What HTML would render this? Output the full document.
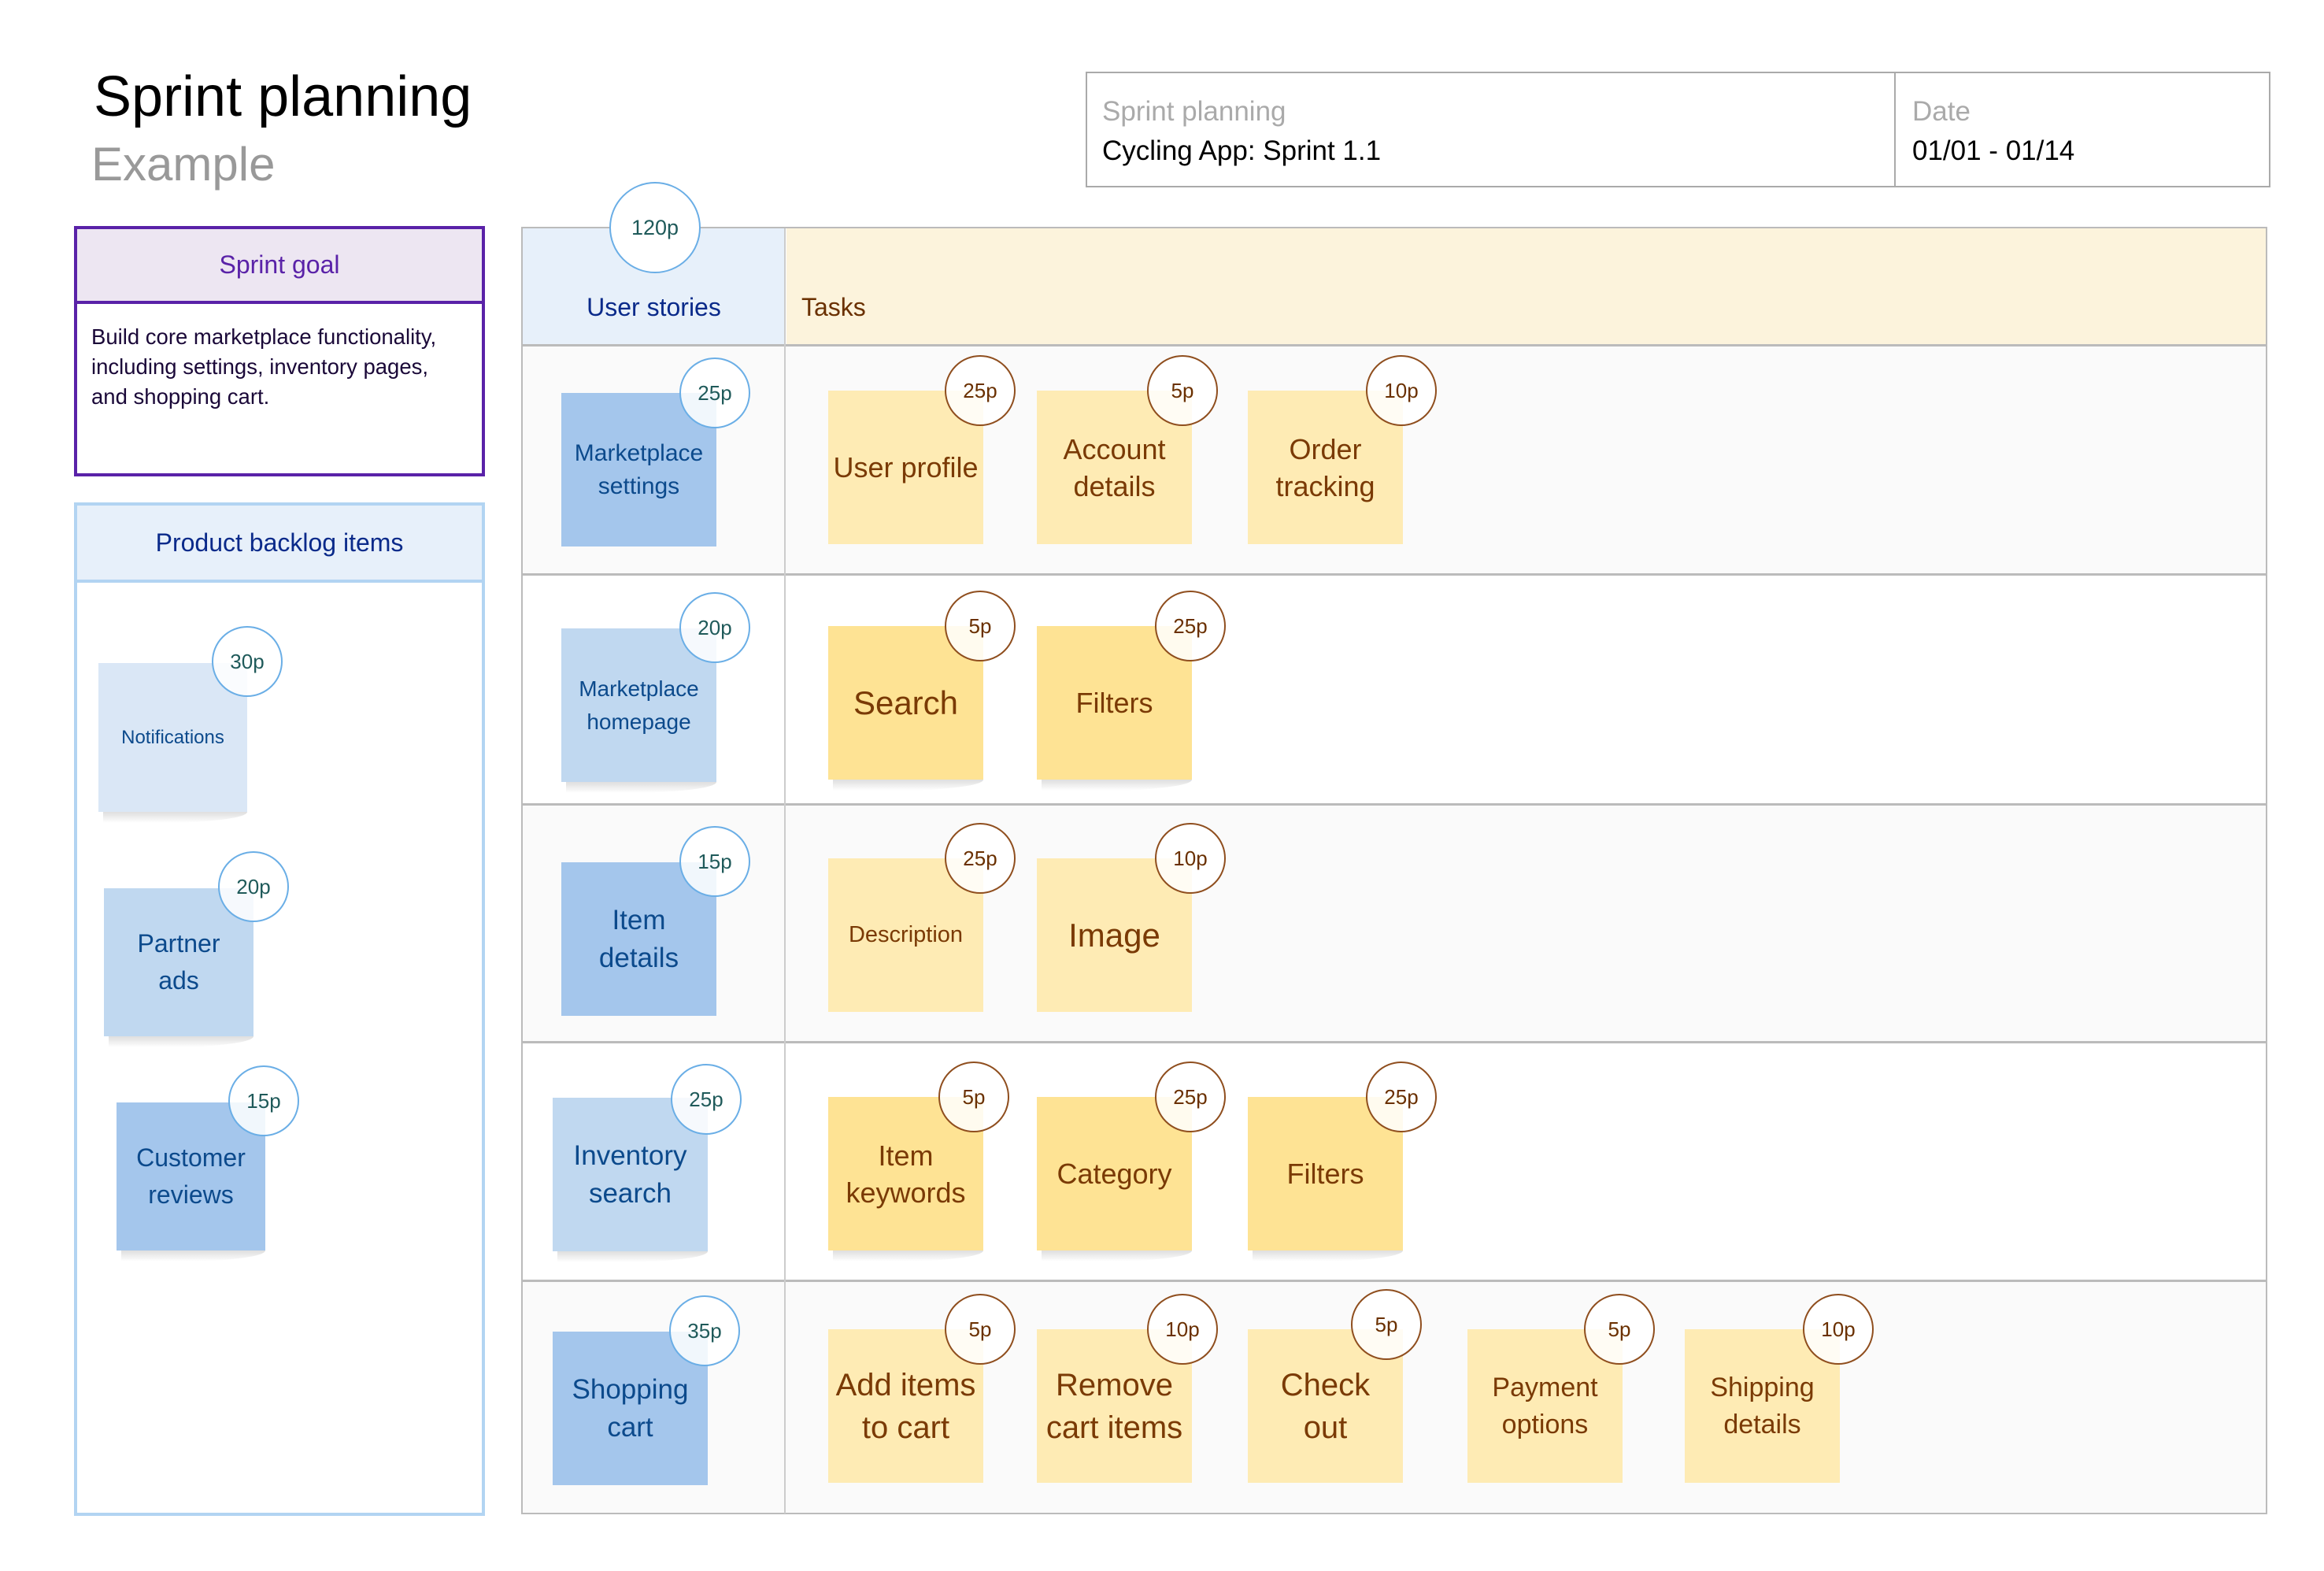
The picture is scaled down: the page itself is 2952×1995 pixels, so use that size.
<!DOCTYPE html>
<html><head><meta charset="utf-8"><style>
*{margin:0;padding:0;box-sizing:border-box}
body{width:2952px;height:1995px;background:#fff;position:relative;overflow:hidden;font-family:"Liberation Sans",Arial,sans-serif}
.a{position:absolute}
.s{position:absolute;width:197px;height:195px;display:flex;align-items:center;justify-content:center;text-align:center;line-height:47px}
.s::after{content:"";position:absolute;left:6px;right:0;bottom:-14px;height:14px;background:linear-gradient(to bottom,rgba(0,0,0,.13),rgba(0,0,0,0));border-radius:0 0 60% 0/0 0 100% 0;z-index:-1}
.t{color:#7a3a05;font-size:36px}
.u{color:#0c4a8c;font-size:31px;line-height:42px}
.c{position:absolute;width:90px;height:90px;border-radius:50%;background:rgba(255,255,255,.85);display:flex;align-items:center;justify-content:center;font-size:26px;z-index:2}
.cy{border:2px solid #8f4e1e;color:#6a3000}
.cb{border:2px solid #6aaee6;color:#1f5a5a}
</style></head><body>
<div class="a" style="left:119px;top:82px;font-size:72px;color:#000">Sprint planning</div>
<div class="a" style="left:116px;top:174px;font-size:60px;color:#999">Example</div>

<div class="a" style="left:1379px;top:91px;width:1505px;height:147px;border:2px solid #aaa"></div>
<div class="a" style="left:2406px;top:91px;width:2px;height:147px;background:#aaa"></div>
<div class="a" style="left:1400px;top:122px;font-size:35px;color:#aaa">Sprint planning</div>
<div class="a" style="left:1400px;top:172px;font-size:35px;color:#000">Cycling App: Sprint 1.1</div>
<div class="a" style="left:2429px;top:122px;font-size:35px;color:#aaa">Date</div>
<div class="a" style="left:2429px;top:172px;font-size:35px;color:#000">01/01 - 01/14</div>

<div class="a" style="left:94px;top:287px;width:522px;height:318px;border:4px solid #5a22a8"></div>
<div class="a" style="left:98px;top:291px;width:514px;height:95px;background:#ede6f2;border-bottom:4px solid #5a22a8;display:flex;align-items:center;justify-content:center;font-size:32px;color:#5a22a8">Sprint goal</div>
<div class="a" style="left:116px;top:409px;font-size:27.5px;line-height:38px;color:#1a0838">Build core marketplace functionality,<br>including settings, inventory pages,<br>and shopping cart.</div>

<div class="a" style="left:94px;top:638px;width:522px;height:1287px;border:4px solid #b2d4f2"></div>
<div class="a" style="left:98px;top:642px;width:514px;height:98px;background:#e7f0fa;border-bottom:4px solid #b2d4f2;display:flex;align-items:center;justify-content:center;font-size:32px;color:#0a2a8a">Product backlog items</div>
<div class="s u" style="left:125px;top:842px;width:189px;height:189px;background:#dae7f6;font-size:24px">Notifications</div>
<div class="c cb" style="left:269px;top:795px">30p</div>
<div class="s u" style="left:132px;top:1128px;width:190px;height:188px;background:#c0d8f0;font-size:32px;line-height:47px">Partner<br>ads</div>
<div class="c cb" style="left:277px;top:1081px">20p</div>
<div class="s u" style="left:148px;top:1400px;width:189px;height:188px;background:#a4c6ec;font-size:32px;line-height:47px">Customer<br>reviews</div>
<div class="c cb" style="left:290px;top:1353px">15p</div>

<div class="a" style="left:662px;top:288px;width:2218px;height:1635px;border:2px solid #bbb"></div>
<div class="a" style="left:664px;top:290px;width:333px;height:147px;background:#e7f0fa"></div>
<div class="a" style="left:999px;top:290px;width:1879px;height:147px;background:#fcf3dc"></div>
<div class="a" style="left:664px;top:437px;width:2214px;height:3px;background:#bbb"></div>
<div class="a" style="left:664px;top:440px;width:2214px;height:288px;background:#fafafa"></div>
<div class="a" style="left:664px;top:728px;width:2214px;height:3px;background:#bbb"></div>
<div class="a" style="left:664px;top:1020px;width:2214px;height:3px;background:#bbb"></div>
<div class="a" style="left:664px;top:1023px;width:2214px;height:299px;background:#fafafa"></div>
<div class="a" style="left:664px;top:1322px;width:2214px;height:3px;background:#bbb"></div>
<div class="a" style="left:664px;top:1625px;width:2214px;height:3px;background:#bbb"></div>
<div class="a" style="left:664px;top:1628px;width:2214px;height:293px;background:#fafafa"></div>
<div class="a" style="left:996px;top:290px;width:2px;height:1632px;background:#ccc"></div>
<div class="a" style="left:664px;top:372px;width:333px;text-align:center;font-size:32px;color:#0a2a8a">User stories</div>
<div class="a" style="left:1018px;top:372px;font-size:32px;color:#6a3000">Tasks</div>
<div class="c cb" style="left:774px;top:231px;width:116px;height:116px;background:#fff;font-size:27px">120p</div>

<div class="s u" style="left:713px;top:499px;background:#a4c6ec;font-size:30px">Marketplace<br>settings</div>
<div class="c cb" style="left:863px;top:454px">25p</div>
<div class="s u" style="left:713px;top:798px;background:#c0d8f0;font-size:28px">Marketplace<br>homepage</div>
<div class="c cb" style="left:863px;top:752px">20p</div>
<div class="s u" style="left:713px;top:1095px;background:#a4c6ec;font-size:35px;line-height:48px">Item<br>details</div>
<div class="c cb" style="left:863px;top:1049px">15p</div>
<div class="s u" style="left:702px;top:1394px;background:#c0d8f0;font-size:35px;line-height:48px">Inventory<br>search</div>
<div class="c cb" style="left:852px;top:1351px">25p</div>
<div class="s u" style="left:702px;top:1691px;background:#a4c6ec;font-size:35px;line-height:48px">Shopping<br>cart</div>
<div class="c cb" style="left:850px;top:1645px">35p</div>

<div class="s t" style="left:1052px;top:496px;background:#feebb4">User profile</div>
<div class="c cy" style="left:1200px;top:451px">25p</div>
<div class="s t" style="left:1317px;top:496px;background:#feebb4">Account<br>details</div>
<div class="c cy" style="left:1457px;top:451px">5p</div>
<div class="s t" style="left:1585px;top:496px;background:#feebb4">Order<br>tracking</div>
<div class="c cy" style="left:1735px;top:451px">10p</div>
<div class="s t" style="left:1052px;top:795px;background:#fee394;font-size:42px">Search</div>
<div class="c cy" style="left:1200px;top:750px">5p</div>
<div class="s t" style="left:1317px;top:795px;background:#fee394">Filters</div>
<div class="c cy" style="left:1467px;top:750px">25p</div>
<div class="s t" style="left:1052px;top:1090px;background:#feebb4;font-size:29px">Description</div>
<div class="c cy" style="left:1200px;top:1045px">25p</div>
<div class="s t" style="left:1317px;top:1090px;background:#feebb4;font-size:42px">Image</div>
<div class="c cy" style="left:1467px;top:1045px">10p</div>
<div class="s t" style="left:1052px;top:1393px;background:#fee394">Item<br>keywords</div>
<div class="c cy" style="left:1192px;top:1348px">5p</div>
<div class="s t" style="left:1317px;top:1393px;background:#fee394">Category</div>
<div class="c cy" style="left:1467px;top:1348px">25p</div>
<div class="s t" style="left:1585px;top:1393px;background:#fee394">Filters</div>
<div class="c cy" style="left:1735px;top:1348px">25p</div>
<div class="s t" style="left:1052px;top:1688px;background:#feebb4;font-size:40px;line-height:54px">Add items<br>to cart</div>
<div class="c cy" style="left:1200px;top:1643px">5p</div>
<div class="s t" style="left:1317px;top:1688px;background:#feebb4;font-size:40px;line-height:54px">Remove<br>cart items</div>
<div class="c cy" style="left:1457px;top:1643px">10p</div>
<div class="s t" style="left:1585px;top:1688px;background:#feebb4;font-size:40px;line-height:54px">Check<br>out</div>
<div class="c cy" style="left:1716px;top:1637px">5p</div>
<div class="s t" style="left:1864px;top:1688px;background:#feebb4;font-size:34px">Payment<br>options</div>
<div class="c cy" style="left:2012px;top:1643px">5p</div>
<div class="s t" style="left:2140px;top:1688px;background:#feebb4;font-size:34px">Shipping<br>details</div>
<div class="c cy" style="left:2290px;top:1643px">10p</div>
</body></html>
